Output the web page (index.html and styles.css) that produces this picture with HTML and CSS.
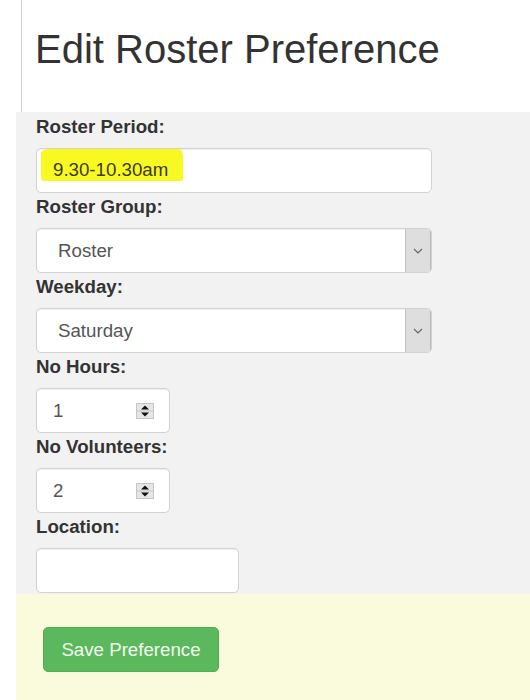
FILE: index.html
```html
<!DOCTYPE html>
<html>
<head>
<meta charset="utf-8">
<link rel="stylesheet" href="styles.css">
</head>
<body>
<div class="header"><h1 class="title">Edit Roster Preference</h1></div>
<div class="panel">
  <div class="field">
    <div class="label">Roster Period:</div>
    <div class="control wide"><span class="hl">9.30-10.30am</span></div>
  </div>
  <div class="field">
    <div class="label">Roster Group:</div>
    <div class="control wide select"><span class="sel-text">Roster</span><span class="sel-arrow"><svg width="10" height="6" viewBox="0 0 10 6"><polyline points="1,1 5,5 9,1" fill="none" stroke="#666" stroke-width="1.2"/></svg></span></div>
  </div>
  <div class="field">
    <div class="label">Weekday:</div>
    <div class="control wide select"><span class="sel-text">Saturday</span><span class="sel-arrow"><svg width="10" height="6" viewBox="0 0 10 6"><polyline points="1,1 5,5 9,1" fill="none" stroke="#666" stroke-width="1.2"/></svg></span></div>
  </div>
  <div class="field">
    <div class="label">No Hours:</div>
    <div class="control num"><span>1</span><svg class="spin" width="18" height="16" viewBox="0 0 18 16"><rect x="0.5" y="0.5" width="17" height="15" fill="#e6e6e6" stroke="#c6c6c6"/><line x1="1" y1="8" x2="17" y2="8" stroke="#c6c6c6"/><polygon points="5,6.5 9,2.5 13,6.5" fill="#111"/><polygon points="5,9.5 13,9.5 9,13.5" fill="#111"/></svg></div>
  </div>
  <div class="field">
    <div class="label">No Volunteers:</div>
    <div class="control num"><span>2</span><svg class="spin" width="18" height="16" viewBox="0 0 18 16"><rect x="0.5" y="0.5" width="17" height="15" fill="#e6e6e6" stroke="#c6c6c6"/><line x1="1" y1="8" x2="17" y2="8" stroke="#c6c6c6"/><polygon points="5,6.5 9,2.5 13,6.5" fill="#111"/><polygon points="5,9.5 13,9.5 9,13.5" fill="#111"/></svg></div>
  </div>
  <div class="field">
    <div class="label">Location:</div>
    <div class="control loc"></div>
  </div>
</div>
<div class="footer">
  <button class="btn">Save Preference</button>
</div>
</body>
</html>
```
FILE: styles.css
```css
html, body {
  margin: 0;
  padding: 0;
  background: #ffffff;
  font-family: "Liberation Sans", Arial, sans-serif;
  color: #333333;
}
.header {
  margin-left: 21px;
  border-left: 1px solid #d0d0d0;
  height: 112px;
  box-sizing: border-box;
  padding: 25px 0 0 13px;
}
.title {
  margin: 0;
  font-size: 40px;
  line-height: 48px;
  font-weight: normal;
  color: #333333;
}
.panel {
  margin-left: 16px;
  background: #f2f2f2;
  padding: 1px 20px 1px 20px;
}
.label {
  font-size: 18.7px;
  font-weight: bold;
  line-height: 27px;
  height: 27px;
  margin-bottom: 8px;
  color: #333333;
}
.control {
  height: 45px;
  box-sizing: border-box;
  background: #ffffff;
  border: 1px solid #d2d2d2;
  border-radius: 5px;
  box-shadow: inset 0 1px 1px rgba(0,0,0,0.06);
  font-size: 18.7px;
  color: #555555;
  display: flex;
  align-items: center;
  padding: 0 16px;
}
.wide { width: 396px; }
.num { width: 134px; justify-content: space-between; padding-right: 15px; }
.loc { width: 203px; }
.hl {
  align-self: flex-start;
  background: #f9f922;
  color: #3a3a1a;
  padding: 11px 15px 1px 12px;
  margin-left: -12px;
  line-height: 20px;
  border-radius: 10px 4px 2px 4px / 4px 8px 2px 4px;
}
.select {
  padding: 0;
  justify-content: space-between;
  align-items: stretch;
  overflow: hidden;
}
.sel-text {
  padding-left: 21px;
  display: flex;
  align-items: center;
}
.sel-arrow {
  width: 24px;
  background: #dedede;
  border-left: 1px solid #c2c2c2;
  border-right: 1px solid #b8b8b8;
  display: flex;
  align-items: center;
  justify-content: center;
}
.spin { display: block; }
.footer {
  margin-left: 16px;
  background: #fafadc;
  height: 106px;
  box-sizing: border-box;
  padding: 33px 0 0 27px;
}
.btn {
  font-family: "Liberation Sans", Arial, sans-serif;
  font-size: 18.7px;
  height: 45px;
  width: 176px;
  padding: 0;
  background: #5cb85c;
  border: 1px solid #4fae4f;
  border-radius: 5px;
  color: #f2fbef;
}
```
